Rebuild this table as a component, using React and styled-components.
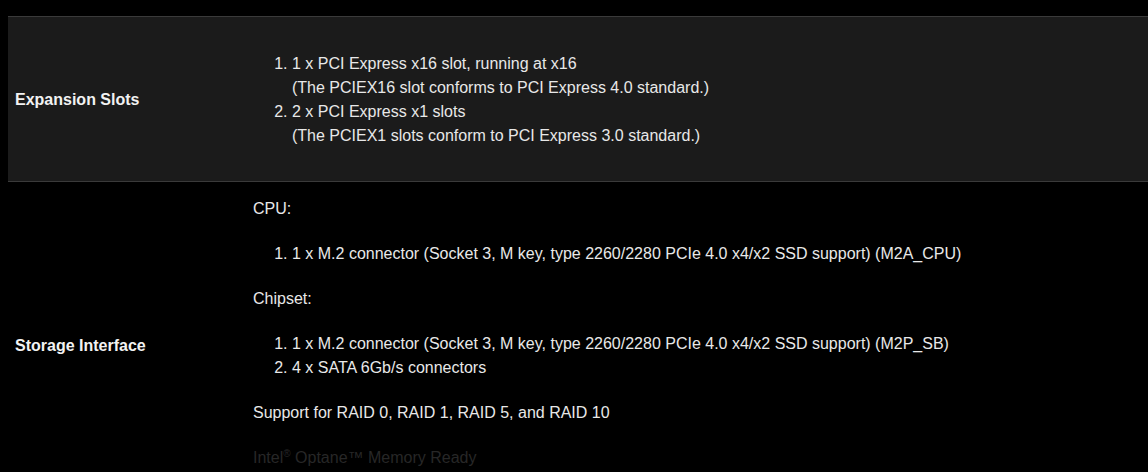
import React from "react";
import styled, { createGlobalStyle } from "styled-components";

const GlobalStyle = createGlobalStyle`
  html, body {
    margin: 0;
    background: #000;
  }
  body {
    font-family: "Liberation Sans", Arial, sans-serif;
    color: #e8e8e8;
  }
`;

// 스펙 표 데이터
const specs = [
  {
    label: "Expansion Slots",
    shaded: true,
    blocks: [
      {
        type: "list",
        items: [
          ["1 x PCI Express x16 slot, running at x16", "(The PCIEX16 slot conforms to PCI Express 4.0 standard.)"],
          ["2 x PCI Express x1 slots", "(The PCIEX1 slots conform to PCI Express 3.0 standard.)"],
        ],
      },
    ],
  },
  {
    label: "Storage Interface",
    shaded: false,
    blocks: [
      { type: "text", text: "CPU:" },
      {
        type: "list",
        items: [["1 x M.2 connector (Socket 3, M key, type 2260/2280 PCIe 4.0 x4/x2 SSD support) (M2A_CPU)"]],
      },
      { type: "text", text: "Chipset:" },
      {
        type: "list",
        items: [
          ["1 x M.2 connector (Socket 3, M key, type 2260/2280 PCIe 4.0 x4/x2 SSD support) (M2P_SB)"],
          ["4 x SATA 6Gb/s connectors"],
        ],
      },
      { type: "text", text: "Support for RAID 0, RAID 1, RAID 5, and RAID 10" },
      { type: "optane" },
    ],
  },
];

const App = () => {
  return (
    <Page>
      <GlobalStyle />
      <SpecTable>
        {specs.map((row) => (
          <SpecRow key={row.label} shaded={row.shaded}>
            <Label>{row.label}</Label>
            <Value shaded={row.shaded}>
              {row.blocks.map((b, i) => {
                if (b.type === "text") return <Para key={i}>{b.text}</Para>;
                if (b.type === "optane")
                  return (
                    <Para key={i} faded>
                      Intel<sup>®</sup> Optane™ Memory Ready
                    </Para>
                  );
                return (
                  <List key={i}>
                    {b.items.map((lines, j) => (
                      <li key={j}>
                        {lines.map((l, k) => (
                          <div key={k}>{l}</div>
                        ))}
                      </li>
                    ))}
                  </List>
                );
              })}
            </Value>
          </SpecRow>
        ))}
      </SpecTable>
    </Page>
  );
};

const Page = styled.div`
  padding: 16px 0 0 8px;
  height: 472px;
  box-sizing: border-box;
  overflow: hidden;
`;

const SpecTable = styled.div`
  display: flex;
  flex-direction: column;
`;

// 한 줄 (라벨 + 내용)
const SpecRow = styled.div`
  display: grid;
  grid-template-columns: 238px 1fr;
  align-items: center;
  background: ${(p) => (p.shaded ? "#1b1b1b" : "#000")};
  border-top: 1px solid ${(p) => (p.shaded ? "#3a3a3a" : "transparent")};
  border-bottom: 1px solid ${(p) => (p.shaded ? "#3a3a3a" : "transparent")};
`;

const Label = styled.div`
  padding: 2px 0 0 7px;
  font-size: 16px;
  font-weight: 700;
  color: #f2f2f2;
`;

const Value = styled.div`
  display: flex;
  flex-direction: column;
  gap: 21px;
  padding: ${(p) => (p.shaded ? "35px 7px 33px" : "14px 7px 37px")};
  font-size: 16px;
  line-height: 24px;
`;

const Para = styled.div`
  color: ${(p) => (p.faded ? "#272727" : "#e8e8e8")};
  > sup {
    font-size: 10px;
    line-height: 0;
  }
`;

const List = styled.ol`
  margin: 0;
  padding-left: 39px;
`;

export default App;
